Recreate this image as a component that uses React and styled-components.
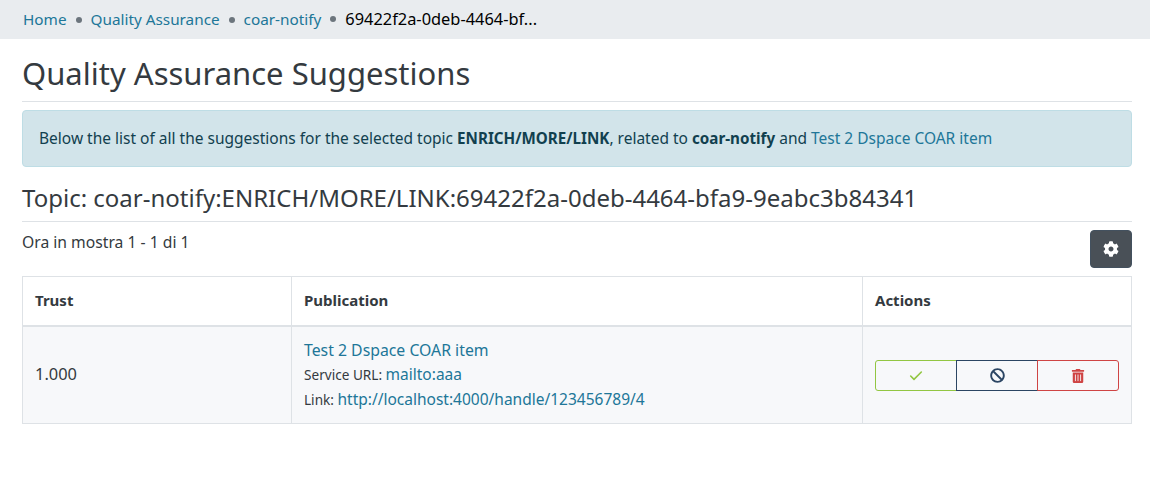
import React from 'react';
import styled, { createGlobalStyle } from 'styled-components';
import { FaCog, FaBan, FaTrashAlt } from 'react-icons/fa';
import { Check } from 'lucide-react';

const GlobalStyle = createGlobalStyle`
  * { box-sizing: border-box; }
  body {
    margin: 0;
    background: #fff;
    color: #343a40;
    font-family: "Noto Sans", "Open Sans", sans-serif;
    font-size: 15.5px;
    line-height: 1.5;
  }
`;

const Link = styled.a`
  color: #207698;
  text-decoration: none;
`;

const Breadcrumb = styled.nav`
  display: flex;
  align-items: center;
  height: 39px;
  padding-left: 23px;
  background: #e9ecef;
`;

const Crumb = styled.span`
  display: flex;
  align-items: center;
  color: #000;
  font-size: ${p => (p.$active ? '16.4px' : '15.3px')};
  &:not(:first-child)::before {
    content: '';
    width: 6px;
    height: 6px;
    margin: 0 9px;
    border-radius: 50%;
    background: #6c757d;
  }
`;

const Page = styled.main`
  padding: 0 18px 0 22px;
`;

const Title = styled.h1`
  margin: 0;
  height: 63px;
  padding-top: 12px;
  border-bottom: 1px solid #dee2e6;
  font-size: 31px;
  font-weight: 400;
  line-height: 44px;
`;

const Alert = styled.div`
  display: flex;
  align-items: center;
  height: 57px;
  margin-top: 8px;
  padding: 0 16px;
  border: 1px solid #bedde5;
  border-radius: 4px;
  background: #d2e4ea;
  color: #11404f;
  b { font-size: 15.2px; font-weight: 700; }
`;

const Topic = styled.h2`
  margin: 0;
  height: 55px;
  padding-top: 14px;
  border-bottom: 1px solid #dee2e6;
  font-size: 24px;
  font-weight: 400;
  line-height: 34px;
`;

const PagerRow = styled.div`
  display: flex;
  justify-content: space-between;
  align-items: flex-start;
  height: 54px;
  padding-top: 8px;
`;

const PagerText = styled.span`
  font-size: 15.7px;
  line-height: 24px;
`;

const GearButton = styled.button`
  display: flex;
  align-items: center;
  justify-content: center;
  width: 42px;
  height: 38px;
  border: 1px solid #43515f;
  border-radius: 4px;
  background: #495057;
  color: #fff;
  font-size: 16px;
`;

const Table = styled.table`
  width: 100%;
  border-collapse: collapse;
  table-layout: fixed;
`;

const HeadCell = styled.th`
  width: ${p => p.$width};
  height: 49px;
  padding: 0 12px 2px;
  border: 1px solid #dee2e6;
  border-bottom-width: 2px;
  text-align: left;
  font-size: 15px;
  font-weight: 700;
`;

const Cell = styled.td`
  height: 98px;
  padding: 0 12px;
  border: 1px solid #dee2e6;
  background: #f7f8fa;
`;

const TrustCell = styled(Cell)`
  font-size: 16.4px;
`;

const ActionsCell = styled(Cell)`
  padding-top: 2px;
`;

const PubTitle = styled.div`
  font-size: 15.8px;
  line-height: 24px;
`;

const PubMeta = styled.div`
  font-size: 13.6px;
  line-height: 24px;
  a { font-size: 15.5px; }
`;

const ActionGroup = styled.div`
  display: flex;
`;

const ActionButton = styled.button`
  display: flex;
  align-items: center;
  justify-content: center;
  flex: 1;
  height: 31px;
  margin-left: -1px;
  padding: 0;
  border: 1px solid ${p => p.$color};
  background: transparent;
  color: ${p => p.$color};
  font-size: ${p => p.$icon || '14px'};
  &:first-child { margin-left: 0; border-radius: 3px 0 0 3px; }
  &:last-child { border-radius: 0 3px 3px 0; }
`;

export default function App() {
  return (
    <>
      <GlobalStyle />
      <Breadcrumb>
        <Crumb><Link href="#">Home</Link></Crumb>
        <Crumb><Link href="#">Quality Assurance</Link></Crumb>
        <Crumb><Link href="#">coar-notify</Link></Crumb>
        <Crumb $active>69422f2a-0deb-4464-bf...</Crumb>
      </Breadcrumb>
      <Page>
        <Title>Quality Assurance Suggestions</Title>
        <Alert>
          <span>
            Below the list of all the suggestions for the selected topic <b>ENRICH/MORE/LINK</b>, related to <b>coar-notify</b> and <Link href="#">Test 2 Dspace COAR item</Link>
          </span>
        </Alert>
        <Topic>Topic: coar-notify:ENRICH/MORE/LINK:69422f2a-0deb-4464-bfa9-9eabc3b84341</Topic>
        <PagerRow>
          <PagerText>Ora in mostra 1 - 1 di 1</PagerText>
          <GearButton aria-label="Settings"><FaCog /></GearButton>
        </PagerRow>
        <Table>
          <thead>
            <tr>
              <HeadCell $width="269px">Trust</HeadCell>
              <HeadCell $width="571px">Publication</HeadCell>
              <HeadCell>Actions</HeadCell>
            </tr>
          </thead>
          <tbody>
            <tr>
              <TrustCell>1.000</TrustCell>
              <Cell>
                <PubTitle><Link href="#">Test 2 Dspace COAR item</Link></PubTitle>
                <PubMeta>Service URL: <Link href="#">mailto:aaa</Link></PubMeta>
                <PubMeta>Link: <Link href="#">http://localhost:4000/handle/123456789/4</Link></PubMeta>
              </Cell>
              <ActionsCell>
                <ActionGroup>
                  <ActionButton $color="#92c642" aria-label="Accept"><Check size={16} strokeWidth={2.4} /></ActionButton>
                  <ActionButton $color="#2b4563" $icon="15px" aria-label="Ignore"><FaBan /></ActionButton>
                  <ActionButton $color="#cf4444" aria-label="Reject"><FaTrashAlt /></ActionButton>
                </ActionGroup>
              </ActionsCell>
            </tr>
          </tbody>
        </Table>
      </Page>
    </>
  );
}
